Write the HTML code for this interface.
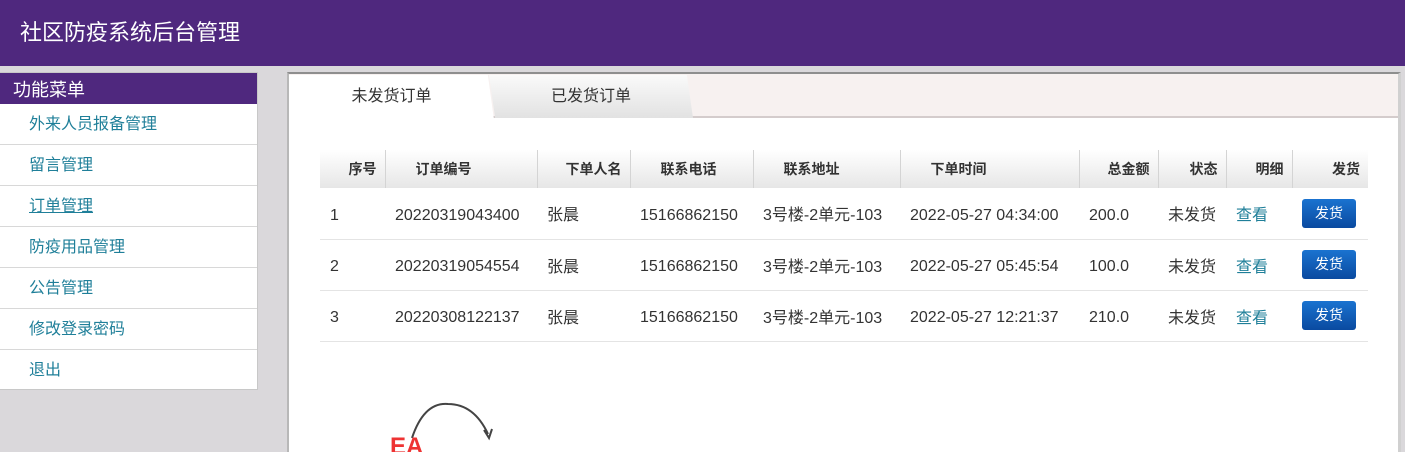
<!DOCTYPE html>
<html><head><meta charset="utf-8"><style>
*{margin:0;padding:0;box-sizing:border-box}
body{width:1405px;height:442px;overflow:hidden;background:#dad8db;font-family:"Liberation Sans","Noto Sans CJK SC",sans-serif;position:relative}
.hd{position:absolute;left:0;top:0;width:1405px;height:66px;background:#4f287e;color:#fff;font-size:22px;line-height:66px;padding-left:20px}
.sb{position:absolute;left:0;top:72px;width:258px;height:318px;background:#fff;border:1px solid #c8c8c8;border-left:none}
.sb .t{background:#4f287e;color:#fff;font-size:18px;height:31px;line-height:34px;padding-left:13px}
.sb a{display:block;height:41px;line-height:41px;border-bottom:1px solid #d8d8d8;color:#1f7f99;font-size:16px;padding-left:29px;text-decoration:none}
.mn{position:absolute;left:287px;top:72px;width:1114px;height:380px;background:#fff;border-top:2px solid #8e8e8e;border-left:2px solid #b8b8b8;border-right:3px solid #d0d0d0}
.tb{position:absolute;left:0;top:0;width:100%;height:44px;background:#f7f1f0;border-bottom:2px solid #d4cccc}
.tab{position:absolute;top:1px;height:43px;line-height:44px;font-size:16px;color:#333;text-align:center}
.t1{left:0;width:205px;background:#fff;height:45px;clip-path:polygon(0 0,97% 0,100% 100%,0 100%)}
.t2{left:200px;width:204px;background:linear-gradient(#fafafa,#e2e2e2);clip-path:polygon(0 0,97% 0,100% 100%,3% 100%)}
table{position:absolute;left:31px;top:76px;border-collapse:collapse;font-size:16px;color:#333}
th{height:38px;background:linear-gradient(#fff,#e6e6e6);font-size:14px;font-weight:bold;color:#333;border-left:1px solid #d4d4d4;text-align:right;padding-right:8px}
th:first-child{border-left:none}
td{height:51px;border-bottom:1px solid #e4e4e4;padding-left:10px;white-space:nowrap;vertical-align:middle}
td.n{padding-top:5px}
.lk{color:#1f7f99}
.bt{display:inline-block;width:54px;height:29px;background:linear-gradient(#1a73d0,#0a4aa0);border-radius:3px;color:#fff;font-size:14px;text-align:center;line-height:29px}
</style></head><body>
<div class="hd">社区防疫系统后台管理</div>
<div class="sb"><div class="t">功能菜单</div>
<a>外来人员报备管理</a><a>留言管理</a><a style="text-decoration:underline">订单管理</a><a>防疫用品管理</a><a>公告管理</a><a>修改登录密码</a><a style="border:none">退出</a></div>
<div class="mn">
<div class="tb"><div class="tab t1">未发货订单</div><div class="tab t2">已发货订单</div></div>
<table>
<tr><th style="width:65px">序号</th><th style="width:152px;text-align:left;padding-left:30px">订单编号</th><th style="width:93px">下单人名</th><th style="width:123px;text-align:left;padding-left:30px">联系电话</th><th style="width:147px;text-align:left;padding-left:30px">联系地址</th><th style="width:179px;text-align:left;padding-left:30px">下单时间</th><th style="width:79px">总金额</th><th style="width:68px">状态</th><th style="width:66px">明细</th><th style="width:76px">发货</th></tr>
<tr><td class="n">1</td><td class="n">20220319043400</td><td>张晨</td><td class="n">15166862150</td><td>3号楼-2单元-103</td><td class="n">2022-05-27 04:34:00</td><td class="n">200.0</td><td>未发货</td><td class="lk">查看</td><td><span class="bt">发货</span></td></tr>
<tr><td class="n">2</td><td class="n">20220319054554</td><td>张晨</td><td class="n">15166862150</td><td>3号楼-2单元-103</td><td class="n">2022-05-27 05:45:54</td><td class="n">100.0</td><td>未发货</td><td class="lk">查看</td><td><span class="bt">发货</span></td></tr>
<tr><td class="n">3</td><td class="n">20220308122137</td><td>张晨</td><td class="n">15166862150</td><td>3号楼-2单元-103</td><td class="n">2022-05-27 12:21:37</td><td class="n">210.0</td><td>未发货</td><td class="lk">查看</td><td><span class="bt">发货</span></td></tr>
</table>
<svg style="position:absolute;left:95px;top:328px" width="120" height="50"><path d="M28 36 Q40 0 64 2 Q90 2 104 32" fill="none" stroke="#444" stroke-width="2"/><path d="M100 28 L105 36 L108 27" fill="none" stroke="#444" stroke-width="2"/><text x="6" y="52" fill="#e33" font-size="24" font-weight="bold" font-family="Liberation Sans">EA</text></svg>
</div>
</body></html>
